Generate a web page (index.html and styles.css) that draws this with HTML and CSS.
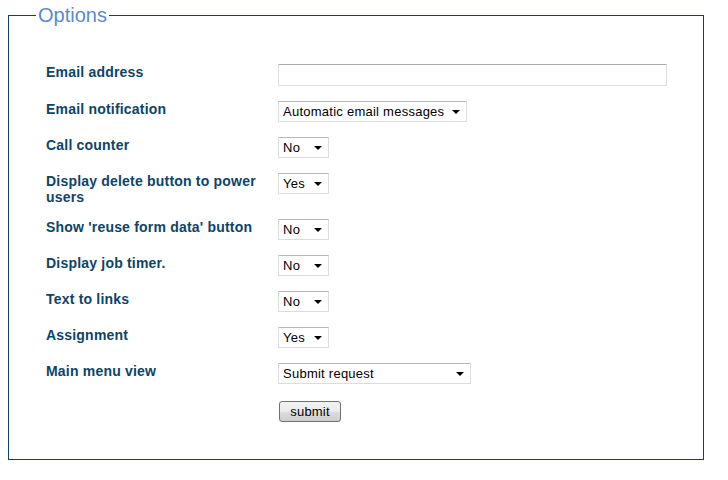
FILE: index.html
```html
<!DOCTYPE html>
<html>
<head>
<meta charset="utf-8">
<link rel="stylesheet" href="styles.css">
</head>
<body>
<fieldset class="options">
  <legend class="options-title">Options</legend>
  <form class="form-grid">
    <label class="lbl">Email address</label>
    <div class="ctl"><input class="text-input" type="text"></div>

    <label class="lbl">Email notification</label>
    <div class="ctl"><span class="sel w-auto"><select><option>Automatic email messages</option></select></span></div>

    <label class="lbl">Call counter</label>
    <div class="ctl"><span class="sel w-small"><select><option>No</option></select></span></div>

    <label class="lbl lbl-two">Display delete button to power users</label>
    <div class="ctl"><span class="sel w-small"><select><option>Yes</option></select></span></div>

    <label class="lbl">Show 'reuse form data' button</label>
    <div class="ctl"><span class="sel w-small"><select><option>No</option></select></span></div>

    <label class="lbl">Display job timer.</label>
    <div class="ctl"><span class="sel w-small"><select><option>No</option></select></span></div>

    <label class="lbl">Text to links</label>
    <div class="ctl"><span class="sel w-small"><select><option>No</option></select></span></div>

    <label class="lbl">Assignment</label>
    <div class="ctl"><span class="sel w-small"><select><option>Yes</option></select></span></div>

    <label class="lbl">Main menu view</label>
    <div class="ctl"><span class="sel w-menu"><select><option>Submit request</option></select></span></div>

    <span class="lbl"></span>
    <div class="ctl"><button class="btn" type="button">submit</button></div>
  </form>
</fieldset>
</body>
</html>
```

FILE: styles.css
```css
html, body {
  margin: 0;
  padding: 0;
  background: #ffffff;
}
body {
  padding: 4px 0 0 8px;
  font-family: "Liberation Sans", Arial, sans-serif;
}
.options {
  box-sizing: border-box;
  width: 696px;
  height: 456px;
  margin: 0;
  padding: 0 0 0 37px;
  border: 1px solid #0d4263;
}
.options-title {
  margin-left: -10px;
  padding: 0 2px;
  font-size: 20px;
  line-height: 22px;
  color: #5b8ad0;
}
.form-grid {
  display: grid;
  grid-template-columns: 232px auto;
  row-gap: 15px;
  margin-top: 38px;
  align-items: start;
}
.lbl {
  font-size: 14px;
  font-weight: bold;
  line-height: 16px;
  letter-spacing: 0.2px;
  color: #0d4468;
  padding-right: 6px;
}
.lbl-two {
  margin-bottom: -1px;
}
.ctl {
  display: flex;
}
.text-input {
  box-sizing: border-box;
  width: 389px;
  height: 22px;
  margin: 0;
  border: 1px solid #dcdee2;
  border-top-color: #a9abb0;
  border-radius: 1px;
  background: #fff;
}
.sel {
  position: relative;
  display: inline-block;
  height: 21px;
}
.sel select {
  -webkit-appearance: none;
  appearance: none;
  box-sizing: border-box;
  width: 100%;
  height: 21px;
  margin: 0;
  padding: 0 0 0 4px;
  border: 1px solid #dadce0;
  border-top-color: #b4b6ba;
  border-radius: 1px;
  background: #fff;
  font-family: "Liberation Sans", Arial, sans-serif;
  font-size: 13px;
  letter-spacing: 0.25px;
  color: #000;
}
.sel::after {
  content: "";
  position: absolute;
  right: 7px;
  top: 9px;
  border-left: 4px solid transparent;
  border-right: 4px solid transparent;
  border-top: 4px solid #000;
  pointer-events: none;
}
.w-small { width: 51px; }
.w-auto { width: 189px; }
.w-menu { width: 193px; }
.btn {
  box-sizing: border-box;
  width: 62px;
  height: 21px;
  margin: 2px 0 0 1px;
  padding: 0;
  border: 1px solid #707070;
  border-radius: 3px;
  background: linear-gradient(#f2f2f2 0%, #ebebeb 50%, #dddddd 51%, #cfcfcf 100%);
  font-family: "Liberation Sans", Arial, sans-serif;
  font-size: 13px;
  letter-spacing: 0.2px;
  color: #000;
}
```
